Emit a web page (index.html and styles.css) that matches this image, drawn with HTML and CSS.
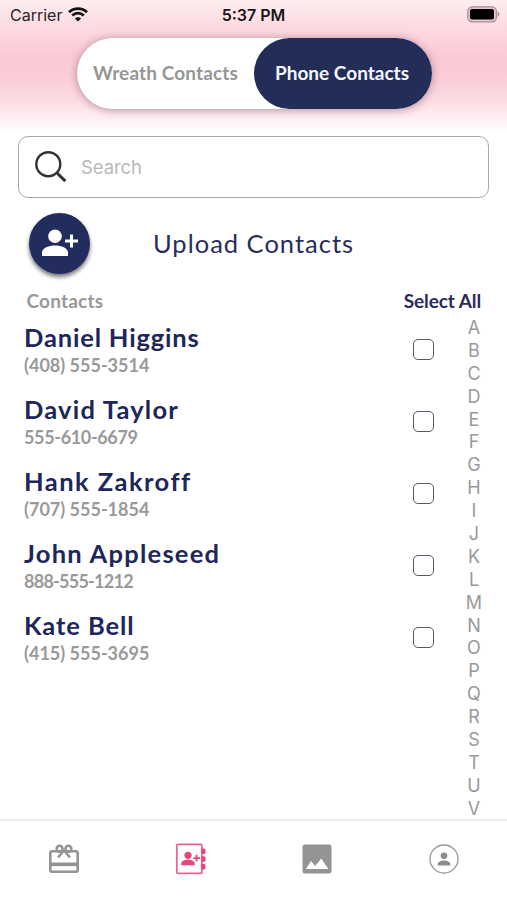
FILE: index.html
```html
<!DOCTYPE html>
<html lang="en">
<head>
<meta charset="utf-8">
<title>Phone Contacts</title>
<link rel="stylesheet" href="styles.css">
</head>
<body>
<div class="app">
  <header class="top">
    <div class="status">
      <div class="carrier"><span>Carrier</span>
        <svg width="20" height="15" viewBox="0 0 20 15"><g fill="none" stroke="#111" stroke-width="2.8"><path d="M1 5.2C6 .3 14 .3 19 5.2"/><path d="M4.200 8.600c3.300-3.200 8.300-3.200 11.600 0"/></g><path d="M6.900 11.500c1.800-1.600 4.400-1.600 6.200 0L10 14.600z" fill="#111"/></svg>
      </div>
      <span class="time">5:37 PM</span>
      <svg class="battery" width="34" height="17" viewBox="0 0 34 17"><rect x="1.800" y=".8" width="28.600" height="15" rx="4.500" fill="#e9c6cd" stroke="#a68f95" stroke-width="1.300"/><rect x="4" y="3" width="24" height="10.600" rx="2" fill="#000"/><path d="M31.700 5.800c2.300.6 2.300 4.400 0 5z" fill="#a68f95"/></svg>
    </div>
    <div class="toggle"><div class="tab"><span class="t-wreath">Wreath Contacts</span></div><div class="tab active"><span class="t-phone">Phone Contacts</span></div></div>
  </header>
  <div class="search">
    <svg width="32" height="32" viewBox="0 0 32 32" fill="none" stroke="#333"><circle cx="13.300" cy="13.200" r="12" stroke-width="2.400"/><path d="M21.800 21.800l8.500 8.300" stroke-width="3"/></svg>
    <span>Search</span>
  </div>
  <div class="upload">
    <div class="fab"><svg width="38" height="28" viewBox="0 0 38 28" fill="#fff"><circle cx="14" cy="7.200" r="6.800"/><path d="M1 27v-3.500c0-4.500 7-7 13-7s13 2.500 13 7V27zM29 5.500h3v5h5v3h-5v5h-3v-5h-5v-3h5z"/></svg></div>
    <span>Upload Contacts</span>
  </div>
  <div class="labels"><span class="l-contacts">Contacts</span><span class="l-all">Select All</span></div>
  <main class="main">
    <div class="list">
      <div class="row"><div><div class="name n1">Daniel Higgins</div><div class="phone">(408) 555-3514</div></div><i class="box"></i></div>
      <div class="row"><div><div class="name n2">David Taylor</div><div class="phone p2">555-610-6679</div></div><i class="box"></i></div>
      <div class="row"><div><div class="name n3">Hank Zakroff</div><div class="phone">(707) 555-1854</div></div><i class="box"></i></div>
      <div class="row"><div><div class="name n4">John Appleseed</div><div class="phone p4">888-555-1212</div></div><i class="box"></i></div>
      <div class="row"><div><div class="name n5">Kate Bell</div><div class="phone">(415) 555-3695</div></div><i class="box"></i></div>
    </div>
    <div class="index"><span>A</span><span>B</span><span>C</span><span>D</span><span>E</span><span>F</span><span>G</span><span>H</span><span>I</span><span>J</span><span>K</span><span>L</span><span>M</span><span>N</span><span>O</span><span>P</span><span>Q</span><span>R</span><span>S</span><span>T</span><span>U</span><span>V</span></div>
  </main>
  <nav class="nav">
    <div><svg width="32" height="32" viewBox="0 0 32 32" fill="none" stroke="#949494" stroke-width="2.600"><rect x="2.300" y="8.300" width="27.400" height="20.400" rx="1.800"/><path d="M2 21.300h28" stroke-width="3.600"/><circle cx="11.600" cy="5.800" r="3"/><circle cx="20.400" cy="5.800" r="3"/><path d="M15 8.500l-5 6M17 8.500l5 6"/></svg></div>
    <div><svg width="32" height="32" viewBox="0 0 32 32" fill="#e8457a"><rect x="1.800" y="1.300" width="25" height="29" rx="1" fill="none" stroke="#e8668e" stroke-width="1.800"/><rect x="26" y="5.500" width="4.500" height="5.500" rx="1.500"/><rect x="26" y="13.200" width="4.500" height="5.500" rx="1.500"/><rect x="26" y="21" width="4.500" height="5.500" rx="1.500"/><circle cx="13" cy="12.300" r="3.600"/><path d="M6.200 22.300v-1.500c0-2.700 3.500-4 6.800-4s6.800 1.300 6.800 4v1.500zM20.700 11.800h1.800v2.500H25v1.800h-2.500v2.500h-1.800v-2.500h-2.500v-1.800h2.500z"/></svg></div>
    <div><svg width="32" height="32" viewBox="0 0 32 32"><rect x="1.500" y="1.500" width="29" height="29" rx="2.500" fill="#949494"/><path d="M5 26l5-8 4.200 5 6-7.500L27.500 26z" fill="#fff"/></svg></div>
    <div><svg width="32" height="32" viewBox="0 0 32 32" fill="#8c8c8c"><circle cx="16" cy="16" r="14" fill="#fff" stroke="#999" stroke-width="1.300"/><circle cx="16" cy="12.700" r="3.300"/><path d="M9.700 22.600v-1.300c0-2.500 3.200-3.700 6.300-3.700s6.300 1.200 6.300 3.700v1.300z"/></svg></div>
  </nav>
</div>
</body>
</html>
```
FILE: styles.css
```css
* { box-sizing: border-box; }
body { margin: 0; background: #fff; font-family: Lato, sans-serif; }
svg { display: block; }
span, .name, .phone { white-space: nowrap; }
.app { width: 507px; height: 900px; display: flex; flex-direction: column; overflow: hidden; }
.top { height: 136px; flex: none; background: linear-gradient(#feeef1 0, #fcdce3 25px, #fbcad5 55px, #fbcbd6 75px, #fcdce3 100px, #fff 134px); }
.status { height: 38px; display: grid; grid-template-columns: 1fr auto 1fr; align-items: start; padding: 5px 7px 0 10px; font: 16px/20px Inter, sans-serif; color: #2c2427; }
.carrier { display: flex; gap: 6px; }
.carrier svg { margin-top: 2px; }
.time { font-weight: 600; color: #1b1517; margin-right: 3px; }
.battery { justify-self: end; margin-top: 1px; }
.toggle { width: 355px; height: 71px; margin-left: 77px; border-radius: 36px; background: #fff; display: flex; box-shadow: 0 1px 9px rgba(90, 40, 60, .45); }
.tab { width: 177px; padding-bottom: 2px; display: flex; align-items: center; justify-content: center; color: #969696; font-size: 19px; font-weight: 700; }
.t-wreath { letter-spacing: .13px; }
.active { width: 178px; padding-right: 2px; border-radius: 36px; background: #232d58; color: #f4f7ff; }
.search { flex: none; height: 62px; width: 471px; margin-left: 18px; border: 1.500px solid #a9a9a9; border-radius: 10px; display: flex; align-items: center; padding-left: 16px; gap: 14px; color: #b8b8b8; font: 18.500px Inter, sans-serif; letter-spacing: -.1px; background: #fff; }
.upload { flex: none; height: 90px; padding-left: 29px; display: flex; align-items: center; color: #272d5c; font-size: 25.500px; letter-spacing: 1px; }
.fab { width: 61px; height: 61px; margin-right: 63px; border-radius: 50%; background: #232d5d; box-shadow: 0 3px 4px rgba(0, 0, 0, .55); display: flex; align-items: center; justify-content: center; }
.labels { flex: none; height: 25px; padding: 1px 26px 0 26.500px; display: flex; justify-content: space-between; font-size: 19px; line-height: 24px; font-weight: 700; color: #999; }
.l-contacts { letter-spacing: .2px; }
.l-all { color: #292c5c; letter-spacing: -.1px; }
.main { flex: 1; min-height: 0; display: flex; }
.list { width: 434px; padding-left: 24px; padding-top: 8px; }
.row { height: 72.100px; display: flex; justify-content: space-between; }
.name { font-size: 25.500px; line-height: 32px; font-weight: 700; color: #20265a; }
.n1 { letter-spacing: .830px; }
.n2 { letter-spacing: 1.200px; }
.n3 { letter-spacing: 1.450px; }
.n4 { letter-spacing: 1.250px; }
.n5 { letter-spacing: .900px; }
.phone { font-size: 18px; line-height: 22px; padding-top: 1px; font-weight: 700; color: #999; }
.p2 { letter-spacing: -.35px; }
.p4 { letter-spacing: -.75px; }
.box { width: 21px; height: 21px; border: 1.500px solid #55566b; border-radius: 5px; margin-top: 18px; }
.index { margin-left: 20px; width: 40px; padding-top: 4px; display: flex; flex-direction: column; text-align: center; font: 18px/22.900px Inter, sans-serif; color: #999; }
.index span { height: 22.900px; flex: none; }
.nav { flex: none; height: 81px; border-top: 2px solid #ececec; display: grid; grid-template-columns: repeat(4, 1fr); justify-items: center; padding: 22px 0 0 1px; background: #fff; }
```
